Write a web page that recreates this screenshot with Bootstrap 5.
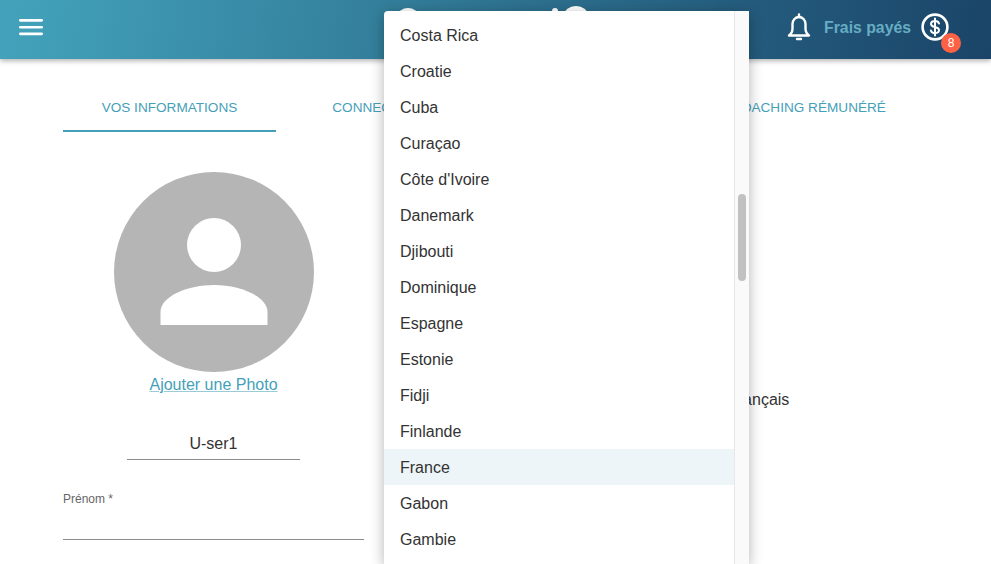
<!DOCTYPE html>
<html lang="fr">
<head>
    <meta charset="UTF-8">
    <meta name="viewport" content="width=device-width, initial-scale=1">
    <title>Profil</title>
    <link href="https://cdn.jsdelivr.net/npm/bootstrap@5.3.0/dist/css/bootstrap.min.css" rel="stylesheet">
    <style>
        html, body { height: 564px; overflow: hidden; }
        body { font-family: "Liberation Sans", Arial, sans-serif; color: #333; background: #fff; }
        .top-bar {
            height: 59px;
            background: linear-gradient(100deg, #43a3bb 0%, #1a4468 100%);
            box-shadow: 0 2px 5px rgba(0,0,0,.3);
            padding: 0 42px 5px 19px;
        }
        .burger { width: 24px; height: 18px; }
        .fees-label { color: #66adc4; font-size: 15.8px; line-height: 20px; font-weight: 700; margin: 2px 10px 0 13px; }
        .fees-wrap { width: 28px; height: 28px; }
        .fees-count {
            top: 20px; left: 20px; width: 20px; height: 20px;
            background: #ff6145; color: #fff; font-size: 12px; line-height: 20px;
        }
        .tab-row { padding: 28px 0 0 63px; }
        .tab-item {
            width: 213px; height: 45px; padding-top: 11px;
            text-align: center; font-size: 13.6px; color: #459fb9;
            white-space: nowrap;
        }
        .tab-item.on { border-bottom: 2px solid #459fb9; }
        .profile-col { width: 301px; margin: 40px 0 0 63px; }
        .avatar-pic { width: 200px; height: 200px; margin-left: 51px; display: block; }
        .photo-link { font-size: 16px; line-height: 26px; color: #459fb9; text-decoration-color: #9ccad7; }
        .user-field {
            width: 173px; margin: 29px 0 0 64px; height: 33px;
            border-bottom: 1px solid #8c8c8c; text-align: center; font-size: 16px; line-height: 33px;
        }
        .first-label { font-size: 12px; color: #666; margin-top: 31px; line-height: 16px; }
        .first-input { height: 33px; border-bottom: 1px solid #8c8c8c; }
        .lang-text { top: 390px; left: 728px; font-size: 16px; line-height: 20px; }
        .country-menu {
            top: 11px; left: 384px; width: 365px; height: 553px;
            background: #fff; border-radius: 4px 0 0 0;
            box-shadow: 0 3px 14px rgba(0,0,0,.3);
            overflow: hidden;
        }
        .country-list { width: 350px; padding-top: 6px; }
        .country-row { height: 36px; line-height: 38px; padding-left: 16px; font-size: 16px; }
        .country-row.picked { background: #eef5f8; }
        .scroll-track { width: 15px; background: #fafafa; border-left: 1px solid #e8e8e8; }
        .scroll-thumb { top: 183px; left: 3px; width: 8px; height: 87px; background: #c1c1c1; border-radius: 4px; }
        .logo-peek { top: 0; left: 390px; }
    </style>
</head>
<body>
    <div class="top-bar d-flex align-items-center justify-content-between">
        <svg class="burger" viewBox="0 0 24 18"><g fill="#fff"><rect y="1" width="24" height="2.700" rx="1.350"/><rect y="7.900" width="24" height="2.700" rx="1.350"/><rect y="14.500" width="24" height="2.700" rx="1.350"/></g></svg>
        <div class="d-flex align-items-center">
            <svg width="24" height="28" viewBox="0 0 24 28" fill="none" stroke="#fff" stroke-width="2.400"><path d="M2 22.500c2-1.500 3.500-3.500 3.500-7v-4.500c0-4 3-7 6.500-7s6.500 3 6.500 7v4.500c0 3.500 1.500 5.500 3.500 7z" stroke-linejoin="round"/><path d="M12 1.500v2.500" stroke-linecap="round"/><path d="M10 26h4" stroke-linecap="round"/></svg>
            <span class="fees-label">Frais payés</span>
            <div class="fees-wrap position-relative">
                <svg width="28" height="28" viewBox="0 0 28 28" fill="none" stroke="#fff"><circle cx="14" cy="14" r="12.400" stroke-width="2.600"/><path d="M18 10.500c-.4-1.700-2-2.600-4-2.600-2.300 0-4 1.200-4 3 0 4.200 8 2.100 8 6.200 0 1.800-1.800 3-4 3-2.100 0-3.700-1-4.100-2.700M14 5.500v17" stroke-width="2" stroke-linecap="round"/></svg>
                <span class="fees-count position-absolute rounded-circle text-center">8</span>
            </div>
        </div>
    </div>

    <svg class="logo-peek position-absolute" width="210" height="14" viewBox="0 0 210 14"><g fill="#fff"><ellipse cx="18" cy="16" rx="10" ry="8"/><circle cx="165" cy="11" r="3"/><ellipse cx="186" cy="15" rx="12" ry="9"/></g></svg>

    <div class="tab-row d-flex">
        <div class="tab-item on">VOS INFORMATIONS</div>
        <div class="tab-item">CONNECTIONS</div>
        <div class="tab-item"></div>
        <div class="tab-item">COACHING RÉMUNÉRÉ</div>
    </div>

    <div class="profile-col">
        <svg class="avatar-pic" viewBox="0 0 200 200"><circle cx="100" cy="100" r="100" fill="#b5b5b5"/><circle cx="100" cy="73" r="27" fill="#fff"/><path d="M46.500 153v-13c0-16 28-27 53.500-27s53.500 11 53.500 27v13z" fill="#fff"/></svg>
        <div class="text-center"><a class="photo-link" href="#">Ajouter une Photo</a></div>
        <div class="user-field">U-ser1</div>
        <div class="first-label">Prénom *</div>
        <div class="first-input"></div>
    </div>

    <div class="lang-text position-absolute">Français</div>

    <div class="country-menu position-absolute d-flex">
        <div class="country-list">
            <div class="country-row">Costa Rica</div>
            <div class="country-row">Croatie</div>
            <div class="country-row">Cuba</div>
            <div class="country-row">Curaçao</div>
            <div class="country-row">Côte d'Ivoire</div>
            <div class="country-row">Danemark</div>
            <div class="country-row">Djibouti</div>
            <div class="country-row">Dominique</div>
            <div class="country-row">Espagne</div>
            <div class="country-row">Estonie</div>
            <div class="country-row">Fidji</div>
            <div class="country-row">Finlande</div>
            <div class="country-row picked">France</div>
            <div class="country-row">Gabon</div>
            <div class="country-row">Gambie</div>
        </div>
        <div class="scroll-track position-relative flex-grow-1">
            <div class="scroll-thumb position-absolute"></div>
        </div>
    </div>

    <script src="https://cdn.jsdelivr.net/npm/bootstrap@5.3.0/dist/js/bootstrap.bundle.min.js"></script>
</body>
</html>
